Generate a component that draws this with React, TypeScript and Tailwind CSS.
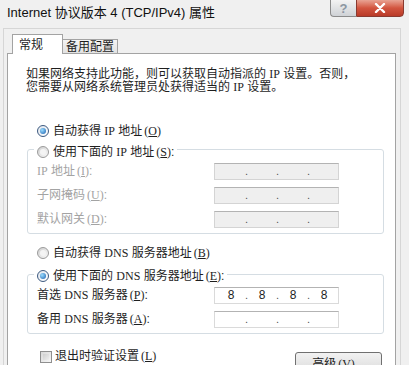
import React from "react";

// latin bits in dialog text use a narrow serif, like the bitmap font in the shot
function L({ children }: { children: React.ReactNode }) {
  return <span className="font-['Liberation_Serif',serif] text-[12px]">{children}</span>;
}

function Key({ k }: { k: string }) {
  return (
    <span className="ml-[2px] font-['Liberation_Serif',serif] text-[12px]">
      (<span className="underline underline-offset-1">{k}</span>)
    </span>
  );
}

function Radio({ checked }: { checked?: boolean }) {
  return (
    <div
      className={
        "w-[12px] h-[12px] shrink-0 rounded-full border flex items-center justify-center " +
        (checked
          ? "border-[#3d5a80] bg-linear-to-br from-[#dfe6ee] to-[#ffffff]"
          : "border-[#9a9a9a] bg-linear-to-br from-[#cfcfcf] to-[#fafafa]")
      }
    >
      {checked ? (
        <div className="w-[6px] h-[6px] rounded-full bg-[radial-gradient(circle_at_35%_35%,#9adcff,#1a5fae)]" />
      ) : (
        <div className="w-[6px] h-[6px] rounded-full bg-[#f4f4f4]" />
      )}
    </div>
  );
}

function IpBox({ value, disabled }: { value?: string[]; disabled?: boolean }) {
  const parts = value || ["", "", "", ""];
  return (
    <div
      className={
        "w-[125px] h-[17px] flex items-center pl-[2px] border border-t-[#b3b3b3] " +
        (disabled ? "bg-[#efefef] border-[#d4d4d4] text-[#8a8a8a]" : "bg-white border-[#dadada] text-[#1e1e1e]")
      }
    >
      {parts.map((p, i) => (
        <React.Fragment key={i}>
          <span className="w-[28px] text-center text-[12px] leading-[15px] font-['Liberation_Sans',sans-serif]">{p}</span>
          {i < 3 && <span className="w-[3px] text-center text-[11px] leading-[15px] text-[#555]">.</span>}
        </React.Fragment>
      ))}
    </div>
  );
}

function FieldRow({ label, value, disabled }: { label: React.ReactNode; value?: string[]; disabled?: boolean }) {
  return (
    <div className="h-[24px] flex items-center">
      <div className={"w-[177px] leading-[13px] " + (disabled ? "text-[#a3a3a3]" : "text-[#1e1e1e]")}>{label}</div>
      <IpBox value={value} disabled={disabled} />
    </div>
  );
}

export default function App() {
  return (
    <div className="w-[409px] h-[365px] overflow-hidden bg-[#f0f0f0] flex flex-col font-['Liberation_Sans','Noto_Sans_CJK_SC',sans-serif] text-[12px] text-[#1e1e1e]">
      {/* title bar */}
      <div className="h-[28px] shrink-0 flex items-start justify-between pl-[7px]">
        <span className="text-[13px] leading-[26px] text-[#111]">Internet 协议版本 4 (TCP/IPv4) 属性</span>
        <div className="flex mr-[5px] -mt-px">
          <div className="w-[26px] h-[18px] rounded-bl-[4px] border border-[#8b8b8b] border-r-0 bg-linear-to-b from-[#f3f3f3] to-[#cfd2d6] flex items-center justify-center text-[13px] font-bold text-[#8c96a2] leading-none">
            ?
          </div>
          <div className="w-[48px] h-[18px] rounded-br-[4px] border border-[#8a3a30] bg-linear-to-b from-[#e8a393] via-[#d2553f] to-[#b93a28] flex items-center justify-center">
            <svg width="12" height="10" viewBox="0 0 12 10">
              <path d="M2 1 L10 9 M10 1 L2 9" stroke="#ffffff" strokeWidth="2.4" strokeLinecap="round" />
            </svg>
          </div>
        </div>
      </div>

      {/* client area */}
      <div className="flex-1 ml-[3px] w-[398px] border border-b-0 border-[#d6d6d6] pl-[3px] pr-[4px] pt-[5px] flex flex-col">
        <div className="flex items-end h-[19px] shrink-0 pl-[5px]">
          <div className="relative z-10 -mb-px w-[51px] h-[20px] bg-white border border-b-0 border-[#a3a3a3] flex items-start pt-[2px] pl-[6px] text-[12px] leading-[16px]">
            常规
          </div>
          <div className="-ml-px w-[56px] h-[14px] bg-linear-to-b from-[#f4f4f4] to-[#e2e2e2] border border-b-0 border-[#a3a3a3] flex items-center justify-center text-[12px] leading-[14px]">
            备用配置
          </div>
        </div>

        <div className="flex-1 bg-white border border-[#a3a3a3] flex flex-col">
          <p className="pt-[14px] pl-[18px] leading-[13px] text-[12px]">
            如果网络支持此功能，则可以获取自动指派的 <L>IP</L> 设置。否则，
            <br />
            您需要从网络系统管理员处获得适当的 <L>IP</L> 设置。
          </p>

          <div className="mt-[28px] pl-[29px] h-[18px] flex items-center gap-[4px]">
            <Radio checked />
            <span>
              自动获得 <L>IP</L> 地址<Key k="O" />
            </span>
          </div>

          <div className="relative z-10 mt-[3px] ml-[26px] pl-[3px] pr-[3px] w-fit bg-white h-[18px] flex items-center gap-[4px]">
            <Radio />
            <span>
              使用下面的 <L>IP</L> 地址<Key k="S" />:
            </span>
          </div>
          <div className="-mt-[12px] ml-[19px] w-[357px] border border-[#d5dde3] rounded-[3px] pt-[9px] pb-[2px] pl-[9px]">
            <FieldRow disabled label={<><L>IP</L> 地址<Key k="I" />:</>} />
            <FieldRow disabled label={<>子网掩码<Key k="U" />:</>} />
            <FieldRow disabled label={<>默认网关<Key k="D" />:</>} />
          </div>

          <div className="mt-[10px] pl-[29px] h-[18px] flex items-center gap-[4px]">
            <Radio />
            <span>
              自动获得 <L>DNS</L> 服务器地址<Key k="B" />
            </span>
          </div>

          <div className="relative z-10 mt-[5px] ml-[26px] pl-[3px] pr-[3px] w-fit bg-white h-[18px] flex items-center gap-[4px]">
            <Radio checked />
            <span>
              使用下面的 <L>DNS</L> 服务器地址<Key k="E" />:
            </span>
          </div>
          <div className="-mt-[11px] ml-[19px] w-[357px] border border-[#d5dde3] rounded-[3px] pt-[8px] pb-[2px] pl-[9px]">
            <FieldRow label={<>首选 <L>DNS</L> 服务器<Key k="P" />:</>} value={["8", "8", "8", "8"]} />
            <FieldRow label={<>备用 <L>DNS</L> 服务器<Key k="A" />:</>} />
          </div>

          <div className="mt-[16px] flex items-start justify-between">
            <div className="pl-[32px] h-[13px] flex items-center gap-[3px]">
              <div className="w-[12px] h-[12px] border border-[#8f8f8f] bg-linear-to-br from-[#d8d8d8] to-[#f7f7f7] p-[2px]">
                <div className="w-full h-full bg-linear-to-br from-[#cfcfcf] to-[#eeeeee]" />
              </div>
              <span className="leading-[13px]">
                退出时验证设置<Key k="L" />
              </span>
            </div>
            <div className="mt-[2px] mr-[13px] w-[87px] h-[23px] rounded-[3px] border border-[#707070] bg-linear-to-b from-[#f2f2f2] to-[#d9d9d9] flex items-center justify-center leading-[14px]">
              高级<Key k="V" />...
            </div>
          </div>
        </div>
      </div>
    </div>
  );
}
